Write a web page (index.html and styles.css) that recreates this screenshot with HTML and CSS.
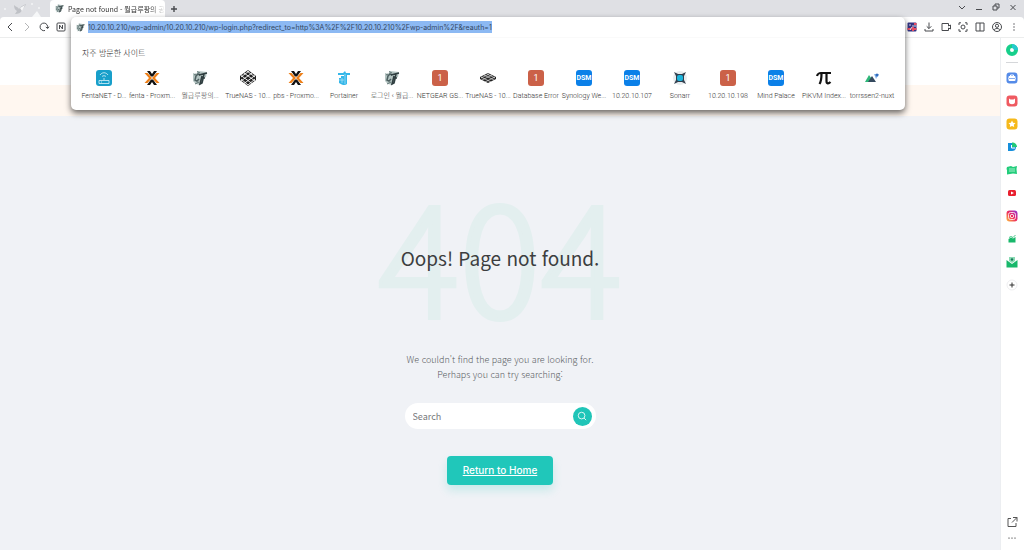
FILE: index.html
```html
<!DOCTYPE html>
<html lang="ko">
<head>
    <meta charset="UTF-8">
    <meta name="viewport" content="width=device-width, initial-scale=1.0">
    <title>Page not found - 월급루팡의 공간</title>
    <link rel="stylesheet" href="styles.css">
</head>
<body>
    <!-- Shared icons -->
    <svg class="defs" aria-hidden="true">
        <symbol id="gt" viewBox="0 0 16 16">
            <path d="m1 3 3 1 2-3 9 1-1 5-2 1-1 5-3 2-4-1-3-3z" fill="#b3c3c1"/>
            <path d="M8 5 6 4 4 6l-1 4 2 1 2-2" fill="none" stroke="#4c5f60" stroke-width="1.500"/>
            <path d="m7 5 8-2M12 4l-2 9-2 1 2-8M13 8h-2" fill="none" stroke="#2f3d3f" stroke-width="1.500"/>
            <path d="m3 14 4-2M5 1.500 8 3M2 5l2-1" stroke="#5f7473" fill="none"/>
        </symbol>
        <symbol id="proxmox" viewBox="0 0 16 16">
            <path d="M3 1h3l2 3 2-3h3L9 6.500H7zM3 15h3l2-3 2 3h3L9 9.500H7z" fill="#111"/>
            <path d="M.5 3h3L8 8l-4.500 5h-3L5 8zM15.500 3h-3L8 8l4.500 5h3L11 8z" fill="#ee7f17"/>
        </symbol>
        <symbol id="truenas" viewBox="0 0 16 16">
            <path d="m8 0 8 6v4l-8 6-8-6V6z" fill="#222"/>
            <path d="m4 3 11 8M1 5.500l11 8M7 1l8 6M1 9l7 6M12 3 1 11M15 5.500l-11 8M9 1 1 7M15 9l-7 6" stroke="#fff" fill="none" stroke-width=".9"/>
        </symbol>
    </svg>

    <div class="browser">
        <header class="tab-bar">
            <svg class="theme-art" viewBox="0 0 50 17" aria-hidden="true">
                <path d="M14 5c2 2 4 2 5 4 1-2 3-3 7-5-1 3-3 4-4 6-1 3-4 4-7 4l2-3c-2-1-3-3-3-6z" fill="#bfc1c6"/>
                <path d="m20 8 5-3-3 6zM32 17l5-6 4 6z" fill="#f6f7f8"/>
                <circle cx="5" cy="9" r="1" fill="#f3f4f6"/><circle cx="32" cy="4" r="1" fill="#f3f4f6"/><circle cx="39" cy="8" r="1" fill="#f3f4f6"/>
            </svg>
            <div class="tab">
                <svg class="tab-icon"><use href="#gt"/></svg>
                <span class="tab-title">Page not found - 월급루팡의 공</span>
            </div>
            <button class="icon-btn new-tab" aria-label="New tab">
                <svg viewBox="0 0 12 12"><path d="M6 3v6M3 6h6" stroke-width="1.400"/></svg>
            </button>
            <div class="window-buttons">
                <button class="icon-btn" aria-label="Tab list"><svg viewBox="0 0 12 12"><path d="m3 5 3 3 3-3"/></svg></button>
                <button class="icon-btn" aria-label="Minimize"><svg viewBox="0 0 12 12"><path d="M3 8.500h6"/></svg></button>
                <button class="icon-btn" aria-label="Restore"><svg viewBox="0 0 12 12"><path d="M3 5h4v4H3zM5 5V3h4v4H7"/></svg></button>
                <button class="icon-btn" aria-label="Close"><svg viewBox="0 0 12 12"><path d="m3.500 4 5 5m0-5-5 5"/></svg></button>
            </div>
        </header>

        <div class="toolbar">
            <nav class="nav-buttons" aria-label="Navigation">
                <button class="icon-btn" aria-label="Back"><svg viewBox="0 0 12 12"><path d="M8 2 4 6l4 4"/></svg></button>
                <button class="icon-btn faded" aria-label="Forward"><svg viewBox="0 0 12 12"><path d="m4 2 4 4-4 4"/></svg></button>
                <button class="icon-btn" aria-label="Reload"><svg viewBox="0 0 12 12"><path d="M7 9.500A3.800 3.800 0 1 1 9.500 7M7.800 6l1.900 1.500L11 5.700"/></svg></button>
                <button class="icon-btn" aria-label="Naver"><svg viewBox="0 0 12 12"><rect x="2" y="2" width="8" height="8" rx="1"/><path d="M4.500 8V4l3 4V4"/></svg></button>
            </nav>
            <div class="tool-buttons">
                <button class="icon-btn" aria-label="Translate">
                    <svg viewBox="0 0 12 12" class="plain"><rect x="1.500" y="1.500" width="9" height="9" rx="1" fill="#343584"/><path d="M1.500 8h4M7 6v4M8 3h2.500M8 8h2.500" stroke="#e64b61" stroke-width="2"/><path d="M6 5h4M4 9l2-3M3 4h2" stroke="#fff" stroke-width=".8"/></svg>
                </button>
                <button class="icon-btn" aria-label="Downloads"><svg viewBox="0 0 12 12"><path d="M6 1.500v6M3.700 5.300 6 7.600l2.300-2.300M2 8v2h8V8"/></svg></button>
                <button class="icon-btn" aria-label="Record"><svg viewBox="0 0 12 12"><path d="M2 2.500h6.500V5L10.500 4v4L8.500 7v2.500H2z"/></svg></button>
                <button class="icon-btn" aria-label="Capture"><svg viewBox="0 0 12 12"><path d="M4 1.800H2V4m6-2.200h2V4M2 8v2.200h2M10 8v2.200H8"/><circle cx="6" cy="6" r="2"/></svg></button>
                <button class="icon-btn" aria-label="Split view"><svg viewBox="0 0 12 12"><path d="M2 2h8v8H2zM6 2v8"/></svg></button>
                <button class="icon-btn" aria-label="Profile"><svg viewBox="0 0 12 12"><circle cx="6" cy="6" r="4.500"/><circle cx="6" cy="4.800" r="1.600"/><path d="M3 9c1-2 5-2 6 0"/></svg></button>
                <button class="icon-btn" aria-label="Menu"><svg viewBox="0 0 12 12" class="dots"><circle cx="6" cy="3" r=".7"/><circle cx="6" cy="6" r=".7"/><circle cx="6" cy="9" r=".7"/></svg></button>
            </div>

            <!-- Address bar popup -->
            <div class="omnibox">
                <div class="address-row">
                    <svg class="address-icon"><use href="#gt"/></svg>
                    <input class="address" type="text" aria-label="Address" value="10.20.10.210/wp-admin/10.20.10.210/wp-login.php?redirect_to=http%3A%2F%2F10.20.10.210%2Fwp-admin%2F&amp;reauth=1">
                </div>
                <h2 class="sites-title">자주 방문한 사이트</h2>
                <div class="sites">
                    <a class="site" href="#"><svg viewBox="0 0 16 16"><rect width="16" height="16" rx="3" fill="#189fca"/><path d="M4 5c2-3 6-3 8 0M6 6.500c1-1 3-1 4 0M8 8v2M3 10.500h10v3H3zM5 12h1" fill="none" stroke="#d9f3fa" stroke-width=".8"/></svg><span>FentaNET - D...</span></a>
                    <a class="site" href="#"><svg><use href="#proxmox"/></svg><span>fenta - Proxm...</span></a>
                    <a class="site" href="#"><svg><use href="#gt"/></svg><span>월급루팡의...</span></a>
                    <a class="site" href="#"><svg><use href="#truenas"/></svg><span>TrueNAS - 10...</span></a>
                    <a class="site" href="#"><svg><use href="#proxmox"/></svg><span>pbs - Proxmo...</span></a>
                    <a class="site" href="#"><svg viewBox="0 0 16 16"><path d="M2 3h5l2-2 1 2h4v2h-3v9c-2 2-5 1-8-1V8h2V6h3V5H2z" fill="#35b7e9"/><path d="M3 10h5M6 8v5M9 4v10" stroke="#c6edfa" stroke-width=".6"/></svg><span>Portainer</span></a>
                    <a class="site" href="#"><svg><use href="#gt"/></svg><span>로그인 ‹ 월급...</span></a>
                    <a class="site" href="#"><b class="tile red">1</b><span>NETGEAR GS...</span></a>
                    <a class="site" href="#"><svg class="flat" viewBox="0 0 16 10"><path d="m8 0 8 4v2l-8 4-8-4V4z" fill="#222"/><path d="m4 2 10 5M1 4l10 5M7 1l8 4M12 2 2 7M15 4 5 9M9 1 1 5" stroke="#fff" fill="none" stroke-width=".6"/></svg><span>TrueNAS - 10...</span></a>
                    <a class="site" href="#"><b class="tile red">1</b><span>Database Error</span></a>
                    <a class="site" href="#"><b class="tile blue">DSM</b><span>Synology We...</span></a>
                    <a class="site" href="#"><b class="tile blue">DSM</b><span>10.20.10.107</span></a>
                    <a class="site" href="#"><svg viewBox="0 0 16 16"><circle cx="8" cy="8" r="7" fill="#e8ecee"/><path d="m2 2 4 2h4l4-2-2 4v4l2 4-4-2H6l-4 2 2-4V6z" fill="#303e4d"/><rect x="5" y="5" width="6" height="6" rx="2" fill="#1cb5dc"/></svg><span>Sonarr</span></a>
                    <a class="site" href="#"><b class="tile red">1</b><span>10.20.10.198</span></a>
                    <a class="site" href="#"><b class="tile blue">DSM</b><span>Mind Palace</span></a>
                    <a class="site" href="#"><svg viewBox="0 0 16 16"><path d="M1 6c1-3 2-3 4-3h10M5.500 4c0 4 0 7-2 10M10.500 4v7c0 3 2 3 4 1" fill="none" stroke="#111" stroke-width="2.200"/></svg><span>PiKVM Index...</span></a>
                    <a class="site" href="#"><svg viewBox="0 0 16 16"><path d="m1 12 4-7 5 7z" fill="#2fb879"/><path d="m4 12 4-6 4 6z" fill="#35495e"/><path d="M10 4h5l-3 5z" fill="#8bb9f0"/><circle cx="13" cy="5" r="1.500" fill="#326cbd"/></svg><span>torrssen2-nuxt</span></a>
                </div>
            </div>
        </div>

        <div class="content">
            <main class="page">
                <div class="site-header"></div>
                <div class="notice-bar"></div>
                <section class="not-found">
                    <div class="hero">
                        <div class="code" aria-hidden="true">404</div>
                        <h1>Oops! Page not found.</h1>
                    </div>
                    <p>We couldn't find the page you are looking for.<br>Perhaps you can try searching:</p>
                    <form class="search" role="search">
                        <input type="search" placeholder="Search" aria-label="Search">
                        <button type="submit" aria-label="Search">
                            <svg viewBox="0 0 12 12"><circle cx="5.500" cy="5.500" r="4"/><path d="m8.500 8.500 2.500 2.500"/></svg>
                        </button>
                    </form>
                    <a class="home-link" href="#">Return to Home</a>
                </section>
            </main>

            <aside class="sidebar">
                <button aria-label="Green dot"><svg viewBox="0 0 12 12"><circle cx="6" cy="6" r="4" fill="none" stroke="#17cf8b" stroke-width="4"/><path d="M6 2a4 4 0 0 1 4 4" fill="none" stroke="#25c9cf" stroke-width="4"/></svg></button>
                <hr>
                <button aria-label="Toolbox"><svg viewBox="0 0 12 12"><rect x=".5" y=".5" width="11" height="11" rx="3" fill="#558be8"/><rect x="2.500" y="4" width="7" height="5" rx="1" fill="#fff"/><path d="M4.500 4V3h3v1M2.500 6.500h7" stroke="#fff" fill="none"/><path d="M3 6.500h6" stroke="#558be8" stroke-width=".7"/></svg></button>
                <button aria-label="Shopping"><svg viewBox="0 0 12 12"><rect x=".5" y=".5" width="11" height="11" rx="3" fill="#ef5a61"/><path d="m3 3.500 1.500 1h3l1.500-1V7c0 3-6 3-6 0z" fill="#fff"/></svg></button>
                <button aria-label="Favorites"><svg viewBox="0 0 12 12"><rect x=".5" y=".5" width="11" height="11" rx="3" fill="#f6b91b"/><path d="m6 2.500 1.100 2.200 2.400.3-1.700 1.700.4 2.400L6 8l-2.200 1.100.4-2.400L2.500 5l2.400-.3z" fill="#fff"/></svg></button>
                <button aria-label="Papago"><svg viewBox="0 0 12 12"><path d="M2 2h4v4h4c0 3-2 4-4 4H2z" fill="#168fdc"/><path d="M6 1.500c3 0 5 2 5 4.500H6z" fill="#21c978"/><path d="M5.500 4v3H9" stroke="#fff" fill="none"/></svg></button>
                <button aria-label="Cafe"><svg viewBox="0 0 12 12"><path d="m1 3 4-1 2 1 4-1-.5 3 .5 5-4-.5-6 1V6L.5 5z" fill="#22cd7b"/><path d="M3 5h6M3 7h6" stroke="#c8f7df" stroke-width=".8"/></svg></button>
                <button aria-label="YouTube"><svg viewBox="0 0 12 12"><rect x="2" y="3" width="8" height="6" rx="1.500" fill="#e9202f"/><path d="m5 4.500 3 1.500-3 1.500z" fill="#fff"/></svg></button>
                <button aria-label="Instagram"><svg viewBox="0 0 12 12"><defs><linearGradient id="insta" x1="0" y1="1" x2="1" y2="0"><stop offset="0" stop-color="#ffc33c"/><stop offset=".5" stop-color="#ed2960"/><stop offset="1" stop-color="#8b32dc"/></linearGradient></defs><rect x=".5" y=".5" width="11" height="11" rx="3" fill="url(#insta)"/><rect x="2.500" y="2.500" width="7" height="7" rx="2" fill="none" stroke="#fff" stroke-width=".8"/><circle cx="6" cy="6" r="1.700" fill="none" stroke="#fff" stroke-width=".8"/></svg></button>
                <button aria-label="Stocks"><svg viewBox="0 0 12 12"><path d="M2.500 6 5 4.500l2 1L9.500 4v5.500h-7z" fill="#18b86b"/><path d="m3 4.500 2-1 2 1L9.500 2" fill="none" stroke="#18b86b" stroke-width=".8"/></svg></button>
                <button aria-label="Mail"><svg viewBox="0 0 12 12"><path d="m.5 4 5.500 4 5.500-4v7.500H.5z" fill="#18b86b"/><path d="M3 1h6v4L6 7 3 5z" fill="#8adbb4"/><circle cx="6" cy="3.500" r="1.200" fill="#18795a"/></svg></button>
                <button aria-label="Add"><svg viewBox="0 0 12 12"><circle cx="6" cy="6" r="5" fill="#fff" stroke="#e6e7e9" stroke-width=".7"/><path d="M6 3.500v5M3.500 6h5" stroke="#333"/></svg></button>
                <div class="sidebar-bottom">
                    <button aria-label="Open in new window"><svg viewBox="0 0 12 12"><path d="M5 2.500H2v8h8V7M7 1.500h4v4M11 1.500l-5 5" fill="none" stroke="#555"/></svg></button>
                    <button aria-label="More"><svg viewBox="0 0 12 12"><circle cx="3" cy="6" r=".6"/><circle cx="6" cy="6" r=".6"/><circle cx="9" cy="6" r=".6"/></svg></button>
                </div>
            </aside>
        </div>
    </div>
</body>
</html>
```

FILE: styles.css
```css
* {
    margin: 0;
    padding: 0;
    box-sizing: border-box;
    font-family: "Noto Sans CJK KR", "Open Sans", sans-serif;
}

.defs {
    position: absolute;
    width: 0;
    height: 0;
}

button {
    border: none;
    background: none;
    cursor: pointer;
}

.browser {
    min-height: 100vh;
    display: flex;
    flex-direction: column;
    background: #dfe0e4;
}

/* Tab bar */
.tab-bar {
    display: flex;
    height: 17px;
}

.theme-art {
    width: 50px;
    height: 17px;
}

.tab {
    display: flex;
    align-items: center;
    gap: 4px;
    width: 115px;
    padding: 0 5px;
    background: #fff;
    border-radius: 4px 4px 0 0;
}

.tab-icon,
.address-icon {
    width: 9px;
    height: 9px;
    flex: none;
}

.tab-title {
    flex: 1;
    white-space: nowrap;
    font-size: 7px;
    color: #333;
    mask-image: linear-gradient(to right, #000 85%, transparent);
}

.icon-btn {
    display: flex;
    align-items: center;
    justify-content: center;
}

.icon-btn svg {
    width: 12px;
    height: 12px;
    fill: none;
    stroke: #484a4e;
}

.icon-btn .plain {
    stroke: none;
}

.icon-btn .dots {
    fill: #484a4e;
    stroke: none;
}

.icon-btn.faded {
    opacity: 0.4;
}

.new-tab {
    width: 18px;
}

.window-buttons {
    display: flex;
    gap: 5px;
    margin-left: auto;
    padding-right: 5px;
    padding-bottom: 4px;
}

/* Toolbar */
.toolbar {
    position: relative;
    z-index: 2;
    display: flex;
    justify-content: space-between;
    height: 21px;
    padding: 0 4px;
    background: #fff;
    border-radius: 4px 4px 0 0;
    border-bottom: 1px solid #eceded;
}

.nav-buttons,
.tool-buttons {
    display: flex;
    gap: 5px;
}

.omnibox {
    position: absolute;
    top: 0;
    left: 71px;
    right: 119px;
    padding-bottom: 8px;
    background: #fff;
    border-radius: 5px;
    box-shadow: 0 3px 6px rgba(0, 0, 0, 0.6);
}

.address-row {
    display: flex;
    align-items: center;
    gap: 3px;
    height: 21px;
    padding: 0 5px;
    border-bottom: 1px solid #fafafa;
}

.address {
    field-sizing: content;
    height: 12px;
    border: none;
    outline: none;
    background: #8cb9f3;
    color: #33475f;
    font-family: Inter, sans-serif;
    font-size: 7px;
}

.sites-title {
    padding: 0 11px;
    margin-top: 9px;
    font-size: 8px;
    font-weight: 300;
    line-height: 12px;
    color: #222;
}

.sites {
    display: flex;
    padding: 11px 9px 0;
}

.site {
    display: flex;
    flex-direction: column;
    align-items: center;
    gap: 4px;
    flex: 0 1 48px;
    min-width: 0;
    text-decoration: none;
    color: #333;
}

.site svg,
.tile {
    width: 16px;
    height: 16px;
}

.tile {
    border-radius: 3px;
    color: #fff;
    font-family: Roboto, sans-serif;
    line-height: 16px;
    text-align: center;
}

.tile.red {
    background: #cb6148;
    font-size: 9px;
    font-weight: 400;
}

.tile.blue {
    background: #0b80e8;
    font-size: 7px;
}

.site .flat {
    height: 10px;
    margin: 3px 0;
}

.site span {
    white-space: nowrap;
    font-family: Roboto, "Noto Sans CJK KR", sans-serif;
    font-size: 7px;
    font-weight: 300;
    line-height: 12px;
}

/* Page */
.content {
    flex: 1;
    display: flex;
}

.page {
    flex: 1;
    display: flex;
    flex-direction: column;
    background: #f0f2f6;
}

.site-header {
    height: 47px;
    background: #fff;
}

.notice-bar {
    height: 31px;
    background: #fff7f0;
}

.not-found {
    display: flex;
    flex-direction: column;
    align-items: center;
    padding-top: 60px;
}

.hero {
    display: grid;
    place-items: center;
    height: 164px;
}

.hero > * {
    grid-area: 1 / 1;
}

.code {
    padding-bottom: 12px;
    font-size: 152px;
    font-weight: 300;
    line-height: 152px;
    color: #e3efef;
    -webkit-text-stroke: 4px #e3efef;
    stroke-linejoin: round;
}

h1 {
    font-size: 19px;
    font-weight: 400;
    line-height: 32px;
    color: #3c3e40;
}

.not-found p {
    margin-top: 12px;
    font-size: 9px;
    font-weight: 300;
    line-height: 15px;
    text-align: center;
    color: #56595d;
}

.search {
    display: flex;
    align-items: center;
    width: 191px;
    height: 26px;
    margin-top: 21px;
    padding: 0 4px 0 8px;
    background: #fff;
    border-radius: 13px;
}

.search input {
    flex: 1;
    min-width: 0;
    border: none;
    outline: none;
    background: none;
    font-size: 9px;
}

.search input::placeholder {
    color: #77797c;
}

.search button {
    display: flex;
    align-items: center;
    justify-content: center;
    width: 19px;
    height: 19px;
    border-radius: 50%;
    background: #20c5b8;
}

.search svg {
    width: 10px;
    height: 10px;
    fill: none;
    stroke: #fff;
}

.home-link {
    margin-top: 27px;
    padding: 0 16px;
    font-family: Inter, sans-serif;
    font-size: 10px;
    font-weight: 500;
    line-height: 29px;
    color: #fff;
    background: #20c7ba;
    border-radius: 4px;
    box-shadow: 0 5px 10px rgba(32, 199, 186, 0.2);
}

/* Sidebar */
.sidebar {
    display: flex;
    flex-direction: column;
    align-items: center;
    gap: 11px;
    width: 24px;
    padding: 6px 2px 6px 0;
    background: #fff;
    border-left: 1px solid #eceef1;
}

.sidebar button {
    height: 12px;
}

.sidebar svg {
    display: block;
    width: 12px;
    height: 12px;
}

.sidebar hr {
    width: 12px;
    margin: -5px 0 -2px;
    border: none;
    border-top: 1px solid #d5d7da;
}

.sidebar-bottom {
    display: flex;
    flex-direction: column;
    gap: 4px;
    margin-top: auto;
}
```
